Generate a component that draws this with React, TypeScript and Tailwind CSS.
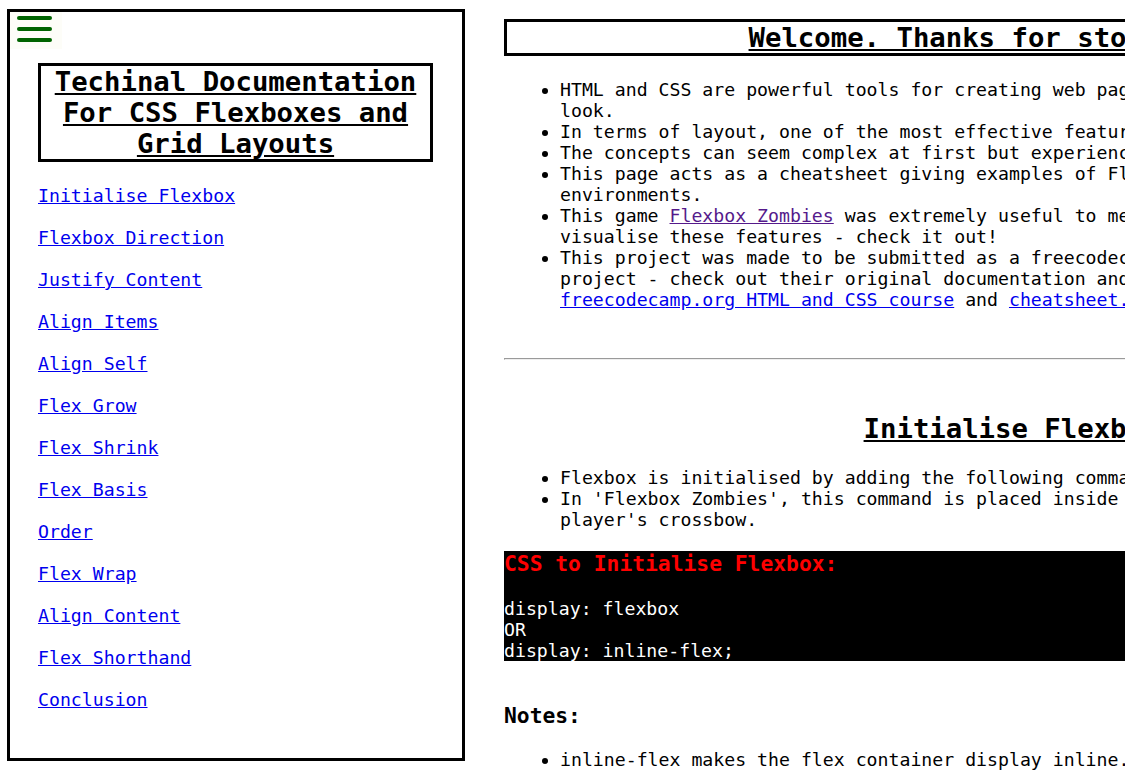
import React from "react";

const navLinks = [
  "Initialise Flexbox",
  "Flexbox Direction",
  "Justify Content",
  "Align Items",
  "Align Self",
  "Flex Grow",
  "Flex Shrink",
  "Flex Basis",
  "Order",
  "Flex Wrap",
  "Align Content",
  "Flex Shorthand",
  "Conclusion",
];

const Sidebar = () => (
  <nav className="mt-[9px] ml-[7px] w-[458px] h-[752px] shrink-0 border-[3px] border-black">
    {/* hamburger toggle */}
    <button className="w-[52px] h-[37px] bg-[#fdfdf8] pl-[7px] pt-[4px] flex flex-col gap-[7px]">
      <span className="block w-[35px] h-[4px] rounded-full bg-[#006400]" />
      <span className="block w-[35px] h-[4px] rounded-full bg-[#006400]" />
      <span className="block w-[35px] h-[4px] rounded-full bg-[#006400]" />
    </button>

    <header className="mt-[14px] ml-[28px] w-[395px] border-[3px] border-black">
      <h1 className="text-[27.3px] leading-[31px] font-bold underline text-center">
        Techinal Documentation For CSS Flexboxes and Grid Layouts
      </h1>
    </header>

    <div className="ml-[28px] mt-[23px] flex flex-col items-start gap-[21px] text-[18.2px] leading-[21px]">
      {navLinks.map((link) => (
        <a key={link} href="#" className="text-[#0000ee] underline">
          {link}
        </a>
      ))}
    </div>
  </nav>
);

const App = () => {
  return (
    <div className="flex h-[776px] w-full overflow-hidden bg-white text-black font-['DejaVu_Sans_Mono',monospace]">
      <Sidebar />

      <main className="ml-[39px] mt-[19px] w-[1015px] shrink-0">
        <header className="border-[3px] border-black">
          <h1 className="text-[27.3px] leading-[31px] font-bold underline text-center">
            Welcome. Thanks for stopping by!
          </h1>
        </header>

        <ul className="mt-[23px] pl-[56px] list-disc text-[18.2px] leading-[21px]">
          <li>
            HTML and CSS are powerful tools for creating web pages and controlling exactly how they
            look.
          </li>
          <li>
            In terms of layout, one of the most effective features of CSS is Flexbox and Grid.
          </li>
          <li>The concepts can seem complex at first but experience makes them second nature.</li>
          <li>
            This page acts as a cheatsheet giving examples of Flexbox and Grid layouts in different
            environments.
          </li>
          <li>
            This game{" "}
            <a href="#" className="text-[#551a8b] underline">
              Flexbox Zombies
            </a>{" "}
            was extremely useful to me when learning as it helped me to visualise these features -
            check it out!
          </li>
          <li>
            This project was made to be submitted as a freecodecamp Responsive Web Design course
            project - check out their original documentation and also the great resources at the{" "}
            <a href="#" className="text-[#0000ee] underline">
              freecodecamp.org HTML and CSS course
            </a>{" "}
            and{" "}
            <a href="#" className="text-[#0000ee] underline">
              cheatsheet.com
            </a>
            .
          </li>
        </ul>

        <hr className="mt-[48px] h-[2px] border-0 border-t border-l border-t-[#9a9a9a] border-l-[#9a9a9a] border-b border-b-[#eeeeee]" />

        <section>
          <h2 className="mt-[53px] text-[27.3px] leading-[31px] font-bold underline text-center">
            Initialise Flexbox
          </h2>

          <ul className="mt-[23px] pl-[56px] list-disc text-[18.2px] leading-[21px]">
            <li>
              Flexbox is initialised by adding the following command to the parent container.
            </li>
            <li>
              In 'Flexbox Zombies', this command is placed inside the magic spell that powers up the
              player's crossbow.
            </li>
          </ul>

          <div className="mt-[21px] bg-black">
            <h3 className="text-[21.3px] leading-[26px] font-bold text-[#ff0000]">
              CSS to Initialise Flexbox:
            </h3>
            <pre className="font-['DejaVu_Sans_Mono',monospace] text-[18.2px] leading-[21px] text-white">
              {"\ndisplay: flexbox\nOR\ndisplay: inline-flex;"}
            </pre>
          </div>

          <h3 className="mt-[43px] text-[21.3px] leading-[24px] font-bold">Notes:</h3>
          <ul className="mt-[21px] pl-[56px] list-disc text-[18.2px] leading-[21px]">
            <li>
              inline-flex makes the flex container display inline. Items keep their flex behaviour.
            </li>
          </ul>
        </section>
      </main>
    </div>
  );
};

export default App;
